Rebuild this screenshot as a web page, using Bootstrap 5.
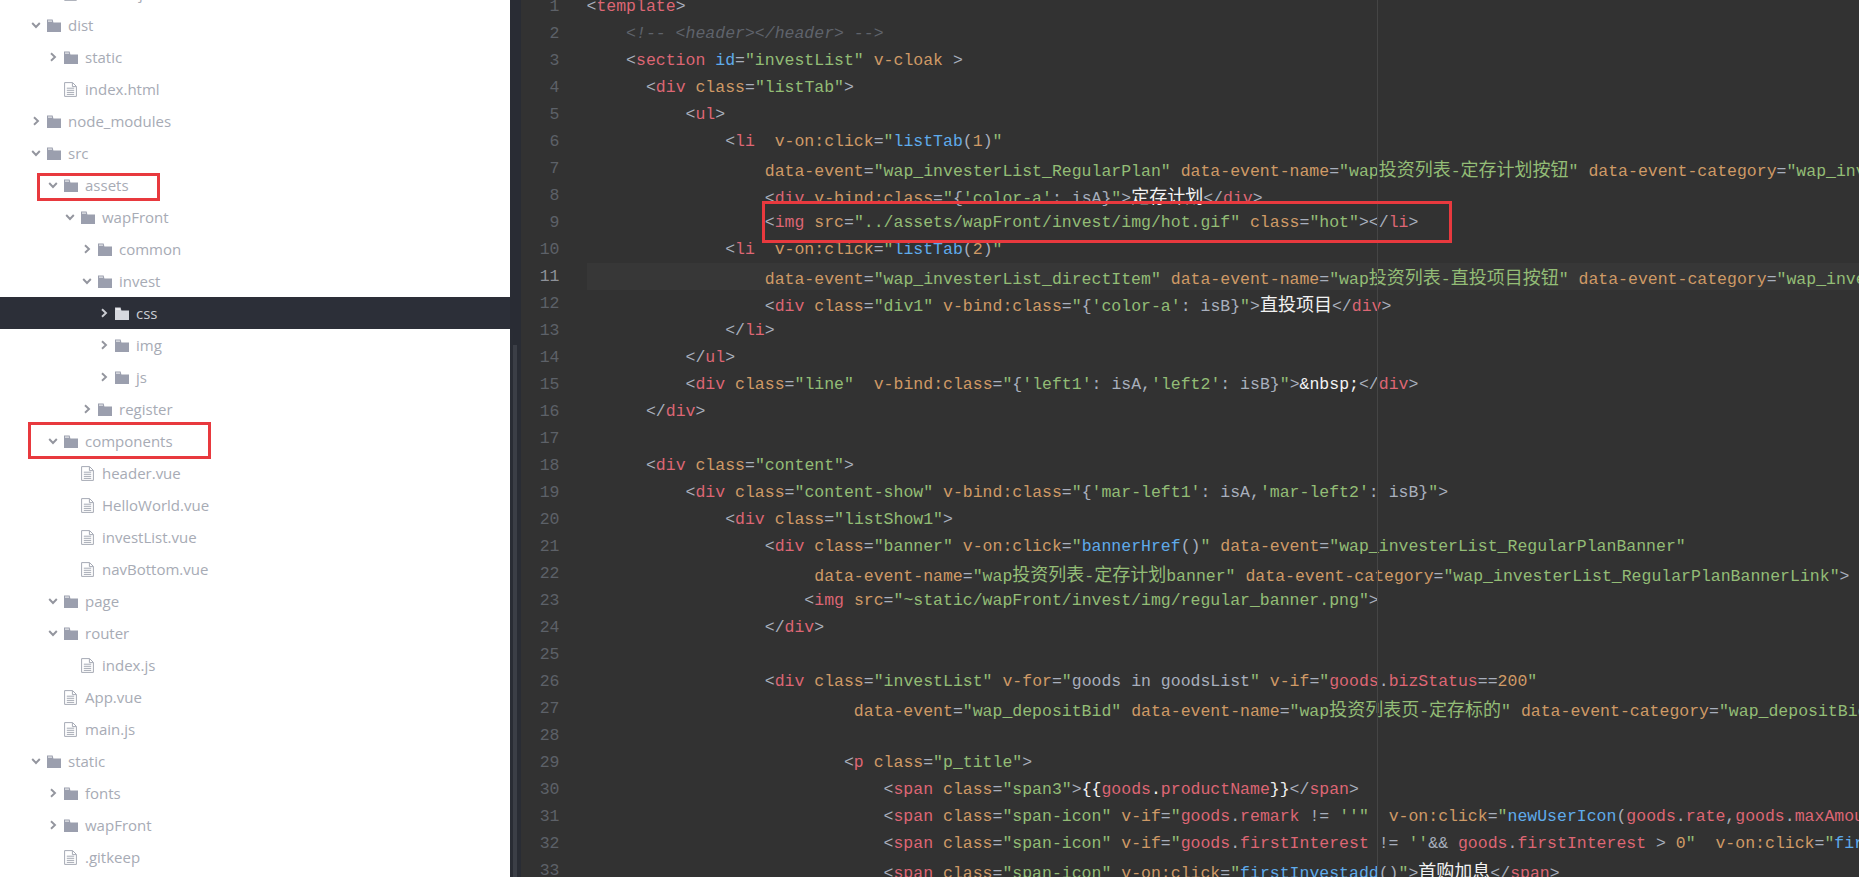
<!doctype html>
<html lang="en">
<head>
<meta charset="utf-8">
<title>Editor</title>
<link href="https://cdn.jsdelivr.net/npm/bootstrap@5.3.0/dist/css/bootstrap.min.css" rel="stylesheet">
<style>
html,body{height:100%;overflow:hidden;background:#323232}
.shell{height:877px;width:1859px}
.side{width:510px;flex:none;background:#fff;color:#a7abb5;font-family:"Open Sans","Noto Sans",sans-serif;font-size:15px}
.treelist{margin-top:-23px}
.rw{height:32px;white-space:nowrap;line-height:32px}
.l0{padding-left:31px}.l1{padding-left:48px}.l2{padding-left:65px}.l3{padding-left:82px}.l4{padding-left:99px}
.rw .chv{width:10px;height:10px;flex:none;margin-right:6px;color:#93959e}
.rw .fld{width:14px;height:13px;flex:none;margin-right:7px;color:#9b9fae}
.rw .doc{width:13px;height:15px;flex:none;margin-right:8px;margin-left:16px;color:#a6aab5}
.rw.sel{background:#2c2f38;color:#c9ccd3}
.rw.sel .chv{color:#ccced4}.rw.sel .fld{color:#d6d8de}
.strip{width:11px;flex:none;background:#292c34}
.thumb{width:4px;height:532px;margin-top:345px;margin-left:3px;background:#3b3e46}
.edit{background:#323232;font-family:"Liberation Mono",monospace;font-size:16.5px;color:#abb2bf}
.lines{margin-top:-7px}
.ln{height:27px;line-height:27px;white-space:pre}
.gt{width:38.5px;flex:none;text-align:right;color:#5d6168}
.cw{margin-left:27px;flex:1 1 auto;min-width:0;overflow:hidden}
.ln.cur .cw{background:#373737}
.ln.cur .gt{color:#8d9199}
.cd{display:block}
.cj{font-family:"Noto Sans CJK SC",sans-serif;font-size:18px}
.pu{color:#a8afbd}.tg{color:#dd6674}.at{color:#cf9a66}.st{color:#93bd76}.fn{color:#5fabeb}.wh{color:#f2f2f2}.gd{color:#dd6674}.cm{color:#5f636b;font-style:italic}
.redbox{position:absolute;border:3px solid #e8393e}
.rb1{left:37px;top:173px;width:123px;height:28px}
.rb2{left:28px;top:422px;width:183px;height:37px}
.rb3{left:762px;top:201px;width:690px;height:42px}
.guide{position:absolute;left:1377px;top:0;width:1px;height:877px;background:#454545}
</style>
</head>
<body class="m-0">
<svg width="0" height="0" class="position-absolute">
<defs>
<symbol id="cr" viewBox="0 0 10 10"><path d="M3 1.2 7 5 3 8.8" fill="none" stroke="currentColor" stroke-width="1.9"/></symbol>
<symbol id="cd" viewBox="0 0 10 10"><path d="M1.2 3 5 7 8.8 3" fill="none" stroke="currentColor" stroke-width="1.9"/></symbol>
<symbol id="fo" viewBox="0 0 14 13"><path d="M0 3.4V.6h5.6l.8 2.8H14V13H0z" fill="currentColor"/><path d="M1 2.7V1.5h3.8l.4 1.2z" fill="#fff" opacity=".75"/></symbol>
<symbol id="fi" viewBox="0 0 13 15"><path d="M.6.6h8l3.8 3.8v10H.6zM8.4.8v3.8h3.8M2.8 6.2h7.4M2.8 8.3h7.4M2.8 10.4h7.4M2.8 12.4h7.4" fill="none" stroke="currentColor" stroke-width="1"/></symbol>
</defs>
</svg>
<div class="shell d-flex position-relative overflow-hidden">
  <aside class="side overflow-hidden">
    <div class="treelist">
      <div class="rw l1 d-flex align-items-center"><svg class="doc"><use href="#fi"/></svg><span>favicon.js</span></div>
      <div class="rw l0 d-flex align-items-center"><svg class="chv"><use href="#cd"/></svg><svg class="fld"><use href="#fo"/></svg><span>dist</span></div>
      <div class="rw l1 d-flex align-items-center"><svg class="chv"><use href="#cr"/></svg><svg class="fld"><use href="#fo"/></svg><span>static</span></div>
      <div class="rw l1 d-flex align-items-center"><svg class="doc"><use href="#fi"/></svg><span>index.html</span></div>
      <div class="rw l0 d-flex align-items-center"><svg class="chv"><use href="#cr"/></svg><svg class="fld"><use href="#fo"/></svg><span>node_modules</span></div>
      <div class="rw l0 d-flex align-items-center"><svg class="chv"><use href="#cd"/></svg><svg class="fld"><use href="#fo"/></svg><span>src</span></div>
      <div class="rw l1 d-flex align-items-center"><svg class="chv"><use href="#cd"/></svg><svg class="fld"><use href="#fo"/></svg><span>assets</span></div>
      <div class="rw l2 d-flex align-items-center"><svg class="chv"><use href="#cd"/></svg><svg class="fld"><use href="#fo"/></svg><span>wapFront</span></div>
      <div class="rw l3 d-flex align-items-center"><svg class="chv"><use href="#cr"/></svg><svg class="fld"><use href="#fo"/></svg><span>common</span></div>
      <div class="rw l3 d-flex align-items-center"><svg class="chv"><use href="#cd"/></svg><svg class="fld"><use href="#fo"/></svg><span>invest</span></div>
      <div class="rw sel l4 d-flex align-items-center"><svg class="chv"><use href="#cr"/></svg><svg class="fld"><use href="#fo"/></svg><span>css</span></div>
      <div class="rw l4 d-flex align-items-center"><svg class="chv"><use href="#cr"/></svg><svg class="fld"><use href="#fo"/></svg><span>img</span></div>
      <div class="rw l4 d-flex align-items-center"><svg class="chv"><use href="#cr"/></svg><svg class="fld"><use href="#fo"/></svg><span>js</span></div>
      <div class="rw l3 d-flex align-items-center"><svg class="chv"><use href="#cr"/></svg><svg class="fld"><use href="#fo"/></svg><span>register</span></div>
      <div class="rw l1 d-flex align-items-center"><svg class="chv"><use href="#cd"/></svg><svg class="fld"><use href="#fo"/></svg><span>components</span></div>
      <div class="rw l2 d-flex align-items-center"><svg class="doc"><use href="#fi"/></svg><span>header.vue</span></div>
      <div class="rw l2 d-flex align-items-center"><svg class="doc"><use href="#fi"/></svg><span>HelloWorld.vue</span></div>
      <div class="rw l2 d-flex align-items-center"><svg class="doc"><use href="#fi"/></svg><span>investList.vue</span></div>
      <div class="rw l2 d-flex align-items-center"><svg class="doc"><use href="#fi"/></svg><span>navBottom.vue</span></div>
      <div class="rw l1 d-flex align-items-center"><svg class="chv"><use href="#cd"/></svg><svg class="fld"><use href="#fo"/></svg><span>page</span></div>
      <div class="rw l1 d-flex align-items-center"><svg class="chv"><use href="#cd"/></svg><svg class="fld"><use href="#fo"/></svg><span>router</span></div>
      <div class="rw l2 d-flex align-items-center"><svg class="doc"><use href="#fi"/></svg><span>index.js</span></div>
      <div class="rw l1 d-flex align-items-center"><svg class="doc"><use href="#fi"/></svg><span>App.vue</span></div>
      <div class="rw l1 d-flex align-items-center"><svg class="doc"><use href="#fi"/></svg><span>main.js</span></div>
      <div class="rw l0 d-flex align-items-center"><svg class="chv"><use href="#cd"/></svg><svg class="fld"><use href="#fo"/></svg><span>static</span></div>
      <div class="rw l1 d-flex align-items-center"><svg class="chv"><use href="#cr"/></svg><svg class="fld"><use href="#fo"/></svg><span>fonts</span></div>
      <div class="rw l1 d-flex align-items-center"><svg class="chv"><use href="#cr"/></svg><svg class="fld"><use href="#fo"/></svg><span>wapFront</span></div>
      <div class="rw l1 d-flex align-items-center"><svg class="doc"><use href="#fi"/></svg><span>.gitkeep</span></div>
    </div>
  </aside>
  <div class="strip"><div class="thumb"></div></div>
  <main class="edit flex-grow-1 overflow-hidden">
    <div class="lines">
<div class="ln d-flex"><span class="gt">1</span><div class="cw"><span class="cd"><span class="pu">&lt;</span><span class="tg">template</span><span class="pu">&gt;</span></span></div></div>
<div class="ln d-flex"><span class="gt">2</span><div class="cw"><span class="cd">    <span class="cm">&lt;!-- &lt;header&gt;&lt;/header&gt; --&gt;</span></span></div></div>
<div class="ln d-flex"><span class="gt">3</span><div class="cw"><span class="cd">    <span class="pu">&lt;</span><span class="tg">section</span> <span class="fn">id</span><span class="pu">=</span><span class="st">"investList"</span> <span class="at">v-cloak</span> <span class="pu">&gt;</span></span></div></div>
<div class="ln d-flex"><span class="gt">4</span><div class="cw"><span class="cd">      <span class="pu">&lt;</span><span class="tg">div</span> <span class="at">class</span><span class="pu">=</span><span class="st">"listTab"</span><span class="pu">&gt;</span></span></div></div>
<div class="ln d-flex"><span class="gt">5</span><div class="cw"><span class="cd">          <span class="pu">&lt;</span><span class="tg">ul</span><span class="pu">&gt;</span></span></div></div>
<div class="ln d-flex"><span class="gt">6</span><div class="cw"><span class="cd">              <span class="pu">&lt;</span><span class="tg">li</span>  <span class="at">v-on:click</span><span class="pu">=</span><span class="st">"</span><span class="fn">listTab</span><span class="pu">(</span><span class="at">1</span><span class="pu">)</span><span class="st">"</span></span></div></div>
<div class="ln d-flex"><span class="gt">7</span><div class="cw"><span class="cd">                  <span class="at">data-event</span><span class="pu">=</span><span class="st">"wap_investerList_RegularPlan"</span> <span class="at">data-event-name</span><span class="pu">=</span><span class="st">"wap<span class="cj">投资列表</span>-<span class="cj">定存计划按钮</span>"</span> <span class="at">data-event-category</span><span class="pu">=</span><span class="st">"wap_inv</span></span></div></div>
<div class="ln d-flex"><span class="gt">8</span><div class="cw"><span class="cd">                  <span class="pu">&lt;</span><span class="tg">div</span> <span class="at">v-bind:class</span><span class="pu">=</span><span class="st">"</span><span class="pu">{</span><span class="st">'color-a'</span><span class="pu">: isA}</span><span class="st">"</span><span class="pu">&gt;</span><span class="wh cj">定存计划</span><span class="pu">&lt;/</span><span class="tg">div</span><span class="pu">&gt;</span></span></div></div>
<div class="ln d-flex"><span class="gt">9</span><div class="cw"><span class="cd">                  <span class="pu">&lt;</span><span class="tg">img</span> <span class="at">src</span><span class="pu">=</span><span class="st">"../assets/wapFront/invest/img/hot.gif"</span> <span class="at">class</span><span class="pu">=</span><span class="st">"hot"</span><span class="pu">&gt;&lt;/</span><span class="tg">li</span><span class="pu">&gt;</span></span></div></div>
<div class="ln d-flex"><span class="gt">10</span><div class="cw"><span class="cd">              <span class="pu">&lt;</span><span class="tg">li</span>  <span class="at">v-on:click</span><span class="pu">=</span><span class="st">"</span><span class="fn">listTab</span><span class="pu">(</span><span class="at">2</span><span class="pu">)</span><span class="st">"</span></span></div></div>
<div class="ln cur d-flex"><span class="gt">11</span><div class="cw"><span class="cd">                  <span class="at">data-event</span><span class="pu">=</span><span class="st">"wap_investerList_directItem"</span> <span class="at">data-event-name</span><span class="pu">=</span><span class="st">"wap<span class="cj">投资列表</span>-<span class="cj">直投项目按钮</span>"</span> <span class="at">data-event-category</span><span class="pu">=</span><span class="st">"wap_inve</span></span></div></div>
<div class="ln d-flex"><span class="gt">12</span><div class="cw"><span class="cd">                  <span class="pu">&lt;</span><span class="tg">div</span> <span class="at">class</span><span class="pu">=</span><span class="st">"div1"</span> <span class="at">v-bind:class</span><span class="pu">=</span><span class="st">"</span><span class="pu">{</span><span class="st">'color-a'</span><span class="pu">: isB}</span><span class="st">"</span><span class="pu">&gt;</span><span class="wh cj">直投项目</span><span class="pu">&lt;/</span><span class="tg">div</span><span class="pu">&gt;</span></span></div></div>
<div class="ln d-flex"><span class="gt">13</span><div class="cw"><span class="cd">              <span class="pu">&lt;/</span><span class="tg">li</span><span class="pu">&gt;</span></span></div></div>
<div class="ln d-flex"><span class="gt">14</span><div class="cw"><span class="cd">          <span class="pu">&lt;/</span><span class="tg">ul</span><span class="pu">&gt;</span></span></div></div>
<div class="ln d-flex"><span class="gt">15</span><div class="cw"><span class="cd">          <span class="pu">&lt;</span><span class="tg">div</span> <span class="at">class</span><span class="pu">=</span><span class="st">"line"</span>  <span class="at">v-bind:class</span><span class="pu">=</span><span class="st">"</span><span class="pu">{</span><span class="st">'left1'</span><span class="pu">: isA,</span><span class="st">'left2'</span><span class="pu">: isB}</span><span class="st">"</span><span class="pu">&gt;</span><span class="wh">&amp;nbsp;</span><span class="pu">&lt;/</span><span class="tg">div</span><span class="pu">&gt;</span></span></div></div>
<div class="ln d-flex"><span class="gt">16</span><div class="cw"><span class="cd">      <span class="pu">&lt;/</span><span class="tg">div</span><span class="pu">&gt;</span></span></div></div>
<div class="ln d-flex"><span class="gt">17</span><div class="cw"><span class="cd"> </span></div></div>
<div class="ln d-flex"><span class="gt">18</span><div class="cw"><span class="cd">      <span class="pu">&lt;</span><span class="tg">div</span> <span class="at">class</span><span class="pu">=</span><span class="st">"content"</span><span class="pu">&gt;</span></span></div></div>
<div class="ln d-flex"><span class="gt">19</span><div class="cw"><span class="cd">          <span class="pu">&lt;</span><span class="tg">div</span> <span class="at">class</span><span class="pu">=</span><span class="st">"content-show"</span> <span class="at">v-bind:class</span><span class="pu">=</span><span class="st">"</span><span class="pu">{</span><span class="st">'mar-left1'</span><span class="pu">: isA,</span><span class="st">'mar-left2'</span><span class="pu">: isB}</span><span class="st">"</span><span class="pu">&gt;</span></span></div></div>
<div class="ln d-flex"><span class="gt">20</span><div class="cw"><span class="cd">              <span class="pu">&lt;</span><span class="tg">div</span> <span class="at">class</span><span class="pu">=</span><span class="st">"listShow1"</span><span class="pu">&gt;</span></span></div></div>
<div class="ln d-flex"><span class="gt">21</span><div class="cw"><span class="cd">                  <span class="pu">&lt;</span><span class="tg">div</span> <span class="at">class</span><span class="pu">=</span><span class="st">"banner"</span> <span class="at">v-on:click</span><span class="pu">=</span><span class="st">"</span><span class="fn">bannerHref</span><span class="pu">()</span><span class="st">"</span> <span class="at">data-event</span><span class="pu">=</span><span class="st">"wap_investerList_RegularPlanBanner"</span></span></div></div>
<div class="ln d-flex"><span class="gt">22</span><div class="cw"><span class="cd">                       <span class="at">data-event-name</span><span class="pu">=</span><span class="st">"wap<span class="cj">投资列表</span>-<span class="cj">定存计划</span>banner"</span> <span class="at">data-event-category</span><span class="pu">=</span><span class="st">"wap_investerList_RegularPlanBannerLink"</span><span class="pu">&gt;</span></span></div></div>
<div class="ln d-flex"><span class="gt">23</span><div class="cw"><span class="cd">                      <span class="pu">&lt;</span><span class="tg">img</span> <span class="at">src</span><span class="pu">=</span><span class="st">"~static/wapFront/invest/img/regular_banner.png"</span><span class="pu">&gt;</span></span></div></div>
<div class="ln d-flex"><span class="gt">24</span><div class="cw"><span class="cd">                  <span class="pu">&lt;/</span><span class="tg">div</span><span class="pu">&gt;</span></span></div></div>
<div class="ln d-flex"><span class="gt">25</span><div class="cw"><span class="cd"> </span></div></div>
<div class="ln d-flex"><span class="gt">26</span><div class="cw"><span class="cd">                  <span class="pu">&lt;</span><span class="tg">div</span> <span class="at">class</span><span class="pu">=</span><span class="st">"investList"</span> <span class="at">v-for</span><span class="pu">=</span><span class="st">"</span><span class="pu">goods in goodsList</span><span class="st">"</span> <span class="at">v-if</span><span class="pu">=</span><span class="st">"</span><span class="gd">goods</span><span class="pu">.</span><span class="gd">bizStatus</span><span class="pu">==</span><span class="at">200</span><span class="st">"</span></span></div></div>
<div class="ln d-flex"><span class="gt">27</span><div class="cw"><span class="cd">                           <span class="at">data-event</span><span class="pu">=</span><span class="st">"wap_depositBid"</span> <span class="at">data-event-name</span><span class="pu">=</span><span class="st">"wap<span class="cj">投资列表页</span>-<span class="cj">定存标的</span>"</span> <span class="at">data-event-category</span><span class="pu">=</span><span class="st">"wap_depositBid</span></span></div></div>
<div class="ln d-flex"><span class="gt">28</span><div class="cw"><span class="cd"> </span></div></div>
<div class="ln d-flex"><span class="gt">29</span><div class="cw"><span class="cd">                          <span class="pu">&lt;</span><span class="tg">p</span> <span class="at">class</span><span class="pu">=</span><span class="st">"p_title"</span><span class="pu">&gt;</span></span></div></div>
<div class="ln d-flex"><span class="gt">30</span><div class="cw"><span class="cd">                              <span class="pu">&lt;</span><span class="tg">span</span> <span class="at">class</span><span class="pu">=</span><span class="st">"span3"</span><span class="pu">&gt;</span><span class="wh">{{</span><span class="gd">goods</span><span class="wh">.</span><span class="gd">productName</span><span class="wh">}}</span><span class="pu">&lt;/</span><span class="tg">span</span><span class="pu">&gt;</span></span></div></div>
<div class="ln d-flex"><span class="gt">31</span><div class="cw"><span class="cd">                              <span class="pu">&lt;</span><span class="tg">span</span> <span class="at">class</span><span class="pu">=</span><span class="st">"span-icon"</span> <span class="at">v-if</span><span class="pu">=</span><span class="st">"</span><span class="gd">goods</span><span class="pu">.</span><span class="gd">remark</span> <span class="pu">!=</span> <span class="st">''"</span>  <span class="at">v-on:click</span><span class="pu">=</span><span class="st">"</span><span class="fn">newUserIcon</span><span class="pu">(</span><span class="gd">goods</span><span class="pu">.</span><span class="gd">rate</span><span class="pu">,</span><span class="gd">goods</span><span class="pu">.</span><span class="gd">maxAmou</span></span></div></div>
<div class="ln d-flex"><span class="gt">32</span><div class="cw"><span class="cd">                              <span class="pu">&lt;</span><span class="tg">span</span> <span class="at">class</span><span class="pu">=</span><span class="st">"span-icon"</span> <span class="at">v-if</span><span class="pu">=</span><span class="st">"</span><span class="gd">goods</span><span class="pu">.</span><span class="gd">firstInterest</span> <span class="pu">!=</span> <span class="st">''</span><span class="pu">&amp;&amp;</span> <span class="gd">goods</span><span class="pu">.</span><span class="gd">firstInterest</span> <span class="pu">&gt;</span> <span class="at">0</span><span class="st">"</span>  <span class="at">v-on:click</span><span class="pu">=</span><span class="st">"</span><span class="fn">fir</span></span></div></div>
<div class="ln d-flex"><span class="gt">33</span><div class="cw"><span class="cd">                              <span class="pu">&lt;</span><span class="tg">span</span> <span class="at">class</span><span class="pu">=</span><span class="st">"span-icon"</span> <span class="at">v-on:click</span><span class="pu">=</span><span class="st">"</span><span class="fn">firstInvestadd</span><span class="pu">()</span><span class="st">"</span><span class="pu">&gt;</span><span class="wh cj">首购加息</span><span class="pu">&lt;/</span><span class="tg">span</span><span class="pu">&gt;</span></span></div></div>
    </div>
  </main>
  <div class="guide"></div>
  <div class="redbox rb1"></div>
  <div class="redbox rb2"></div>
  <div class="redbox rb3"></div>
</div>
<script src="https://cdn.jsdelivr.net/npm/bootstrap@5.3.0/dist/js/bootstrap.bundle.min.js"></script>
</body>
</html>
